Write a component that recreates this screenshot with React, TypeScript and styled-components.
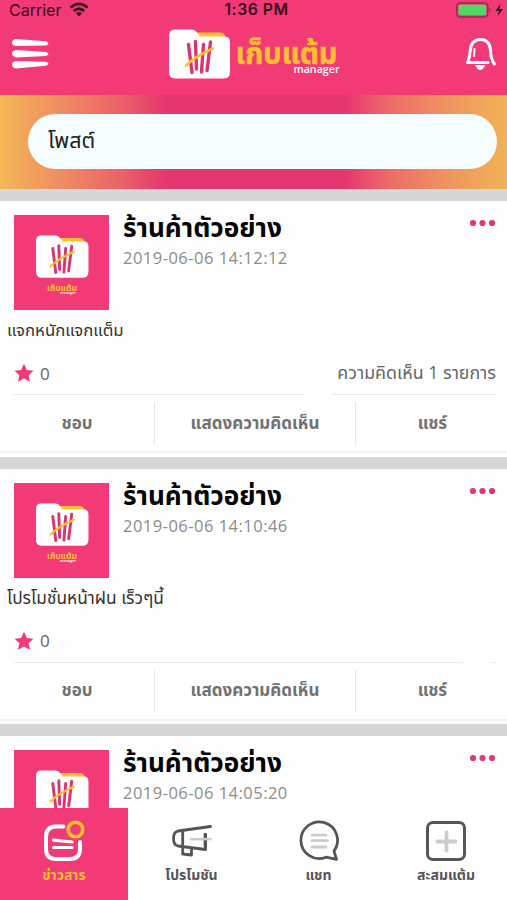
import React from "react";
import styled, { createGlobalStyle } from "styled-components";

const PINK = "#f23a76";
const YELLOW = "#fdc02f";
const THAI = `"Open Sans", "Noto Sans Thai", "Noto Sans", sans-serif`;

const GlobalStyle = createGlobalStyle`
  * { box-sizing: border-box; }
  body { margin: 0; background: #fff; font-family: ${THAI}; }
`;

const Screen = styled.div`
  display: flex;
  flex-direction: column;
  width: 507px;
  height: 900px;
  overflow: hidden;
  background: #fefefe;
`;

const Header = styled.header`
  flex: none;
  height: 95px;
  background: ${PINK};
`;

const StatusBar = styled.div`
  display: grid;
  grid-template-columns: 1fr auto 1fr;
  align-items: center;
  height: 20px;
  padding: 0 3px 0 9px;
  font-family: Inter, sans-serif;
  font-size: 16px;
  line-height: 20px;
  color: #3b0a1d;
`;

const Carrier = styled.div`
  display: flex;
  align-items: center;
  gap: 8px;
  margin-top: -1px;
`;

const Clock = styled.div`
  font-weight: 600;
  font-size: 15.8px;
  letter-spacing: 0.5px;
`;

const Battery = styled.div`
  display: flex;
  justify-content: flex-end;
  margin-top: -1px;
`;

const NavBar = styled.div`
  display: flex;
  justify-content: space-between;
  align-items: flex-start;
  height: 75px;
  padding: 0 10px 0 12px;
`;

const MenuIcon = styled.svg`
  margin-top: 18px;
`;

const BellIcon = styled.svg`
  margin-top: 17px;
`;

const Brand = styled.svg`
  margin: 6px 0 0 -2px;
`;

const Composer = styled.section`
  flex: none;
  height: 94px;
  padding: 19px 10px 0 28px;
  background: linear-gradient(90deg, #f4b858 0, #f1a65b 25px, #f09162 55px, #ea6368 120px, #e6366f 165px, #e6366f 345px, #ec6b68 388px, #f0955f 450px, #f0ae57 495px, #f0b158 507px);
`;

const PostField = styled.div`
  display: flex;
  align-items: center;
  height: 55px;
  padding: 0 20px;
  border-radius: 28px;
  background: #f5fdff;
  color: #222;
`;

const Feed = styled.main`
  flex: 1;
  min-height: 0;
  overflow: hidden;
`;

const Post = styled.article`
  height: 267.5px;
  border-top: 12.5px solid #d7d7d7;
  background: #fefefe;
`;

const PostHead = styled.div`
  display: flex;
  height: 109px;
  padding: 14px 11px 0 14px;
`;

const Avatar = styled.svg`
  flex: none;
  display: block;
  width: 95px;
  height: 95px;
  background: ${PINK};
`;

const PostMeta = styled.div`
  flex: 1;
  padding-left: 14px;
`;

const ShopName = styled.h2`
  margin: 0;
  height: 32px;
  color: #050505;
  line-height: 24px;
`;

const PostDate = styled.time`
  display: block;
  height: 22px;
  font-size: 16.5px;
  letter-spacing: 0.48px;
  line-height: 22px;
  color: #8c8c8c;
`;

const Dots = styled.svg`
  margin-top: 4px;
`;

const PostBody = styled.p`
  display: flex;
  align-items: center;
  height: 42px;
  margin: 0;
  padding-left: 7px;
  color: #333;
`;

const Stats = styled.div<{ $split: number }>`
  display: grid;
  grid-template-columns: ${(p) => p.$split}px 1fr;
  column-gap: 27px;
  height: 43px;
  padding: 0 11px 0 14px;
`;

const Stat = styled.div<{ $end?: boolean }>`
  display: flex;
  align-items: center;
  justify-content: ${(p) => (p.$end ? "flex-end" : "flex-start")};
  gap: 6px;
  border-bottom: 1.5px solid #ebebeb;
  font-size: 17px;
  color: #666;
`;

const Actions = styled.div`
  display: grid;
  grid-template-columns: 155px 201px 1fr;
  height: 58px;
  padding-top: 7px;
  border-bottom: 2px solid #f3f3f3;
`;

const Action = styled.div`
  display: flex;
  align-items: center;
  justify-content: center;
  height: 43px;
  border-right: 1px solid #e5e5e5;
  color: #727272;
  &:last-child { border-right: 0; padding-left: 2px; }
`;

const Tabs = styled.nav`
  flex: none;
  display: grid;
  grid-template-columns: 128px 127px 127px 125px;
  height: 92px;
  background: #fefefe;
`;

const Tab = styled.div<{ $active?: boolean }>`
  display: flex;
  flex-direction: column;
  align-items: center;
  padding-top: 10px;
  background: ${(p) => (p.$active ? PINK : "transparent")};
  color: ${(p) => (p.$active ? YELLOW : "#555")};
  &:last-child { padding-left: 3px; }
`;

const TabLabel = styled.div`
  display: flex;
  align-items: center;
  height: 20px;
  margin-top: 1px;
`;

const Label = styled.span<{ $size: number; $bold?: boolean }>`
  font-size: ${(p) => p.$size}px;
  font-weight: ${(p) => (p.$bold ? 700 : 400)};
  white-space: nowrap;
`;

function Folder() {
  return (
    <g>
      <path d="M25 3H51Q56 3 57 9H31Z" fill={YELLOW} />
      <path d="M6 0H23Q26 0 28 3L31 7H56Q61 7 61 13V42Q61 49 55 49H6Q0 49 0 42V6Q0 0 6 0Z" fill="#fff" />
      <path d="M19.5 15 23 43M26.5 12 27.5 39.5M34.5 15 32.5 42.5M41.5 12.5 38 41" fill="none" stroke="#d93670" strokeWidth="3.4" strokeLinecap="round" />
      <path d="M17 36Q26 27 44 19" fill="none" stroke={YELLOW} strokeWidth="2.6" strokeLinecap="round" />
    </g>
  );
}

function ShopAvatar() {
  return (
    <Avatar viewBox="0 0 95 95">
      <g transform="translate(22 20.5) scale(.86)">
        <Folder />
      </g>
      <text x="33" y="76" fill={YELLOW} fontSize="9" fontWeight="700" textLength="30" lengthAdjust="spacingAndGlyphs">เก็บแต้ม</text>
      <text x="46" y="79" fill="#fff" fontSize="3.8" fontWeight="600" textLength="16" lengthAdjust="spacingAndGlyphs">manager</text>
    </Avatar>
  );
}

type PostData = { date: string; text: string; size: number; comments?: string };

const posts: PostData[] = [
  { date: "2019-06-06 14:12:12", text: "แจกหนักแจกแต็ม", size: 16.8, comments: "ความคิดเห็น 1 รายการ" },
  { date: "2019-06-06 14:10:46", text: "โปรโมชั่นหน้าฝน เร็วๆนี้", size: 17.3 },
  { date: "2019-06-06 14:05:20", text: "", size: 17 },
];

function PostCard({ post }: { post: PostData }) {
  return (
    <Post>
      <PostHead>
        <ShopAvatar />
        <PostMeta>
          <ShopName><Label $size={26.2} $bold>ร้านค้าตัวอย่าง</Label></ShopName>
          <PostDate>{post.date}</PostDate>
        </PostMeta>
        <Dots width="27" height="8" viewBox="0 0 27 8" fill="#df3a70">
          <circle cx="4" cy="4" r="3.1" /><circle cx="13.5" cy="4" r="3.1" /><circle cx="23" cy="4" r="3.1" />
        </Dots>
      </PostHead>
      <PostBody><Label $size={post.size}>{post.text}</Label></PostBody>
      <Stats $split={post.comments ? 290 : 449}>
        <Stat>
          <svg width="20" height="20" viewBox="0 0 20 20">
            <path d="M10 .8 12.9 7 19.5 7.7 14.6 12.2 16 18.8 10 15.5 4 18.8 5.4 12.2 .5 7.7 7.1 7Z" fill={PINK} />
          </svg>
          0
        </Stat>
        <Stat $end>{post.comments && <Label $size={17.8}>{post.comments}</Label>}</Stat>
      </Stats>
      <Actions>
        <Action><Label $size={17} $bold>ชอบ</Label></Action>
        <Action><Label $size={17} $bold>แสดงความคิดเห็น</Label></Action>
        <Action><Label $size={17} $bold>แชร์</Label></Action>
      </Actions>
    </Post>
  );
}

export default function App() {
  return (
    <Screen>
      <GlobalStyle />
      <Header>
        <StatusBar>
          <Carrier>
            Carrier
            <svg width="20" height="15" viewBox="0 0 20 15" fill="none" stroke="#3b0a1d" strokeWidth="2.8">
              <path d="M1.5 5.5Q10-1.8 18.5 5.5M4.8 9Q10 4.6 15.2 9" />
              <path d="M10 14.5 7 11.3Q10 8.8 13 11.3Z" fill="#3b0a1d" stroke="none" />
            </svg>
          </Carrier>
          <Clock>1:36 PM</Clock>
          <Battery>
            <svg width="48" height="16" viewBox="0 0 48 16">
              <rect x=".8" y="1" width="31" height="14" rx="3.5" fill="none" stroke="#8c2850" strokeWidth="1.3" />
              <rect x="2.5" y="2.8" width="27.6" height="10.4" rx="1.8" fill="#4cd964" />
              <path d="M33.5 5.5Q35.5 8 33.5 10.5Z" fill="#8c2850" />
              <path d="M44.5 2 39.5 9H43L41.5 14 47 7H43.5Z" fill="#3b0a1d" />
            </svg>
          </Battery>
        </StatusBar>
        <NavBar>
          <MenuIcon width="38" height="32" viewBox="0 0 38 32" fill="#fff">
            <path d="M4 1 34 3.2Q39 5.5 34 7.5L4 8Q0 7.5 0 4.5T4 1ZM4 12 34 14Q39 16 34 18L4 19.5Q0 18 0 15.5T4 12ZM4 23 34 23.7Q39 25.5 34 27.7L4 30.5Q0 29.5 0 26.5T4 23Z" />
          </MenuIcon>
          <Brand width="176" height="56" viewBox="0 0 176 56">
            <g transform="translate(1 3.5)"><Folder /></g>
            <text x="67.5" y="38" fill={YELLOW} stroke={YELLOW} strokeWidth=".5" fontSize="29.5" fontWeight="700" textLength="102" lengthAdjust="spacingAndGlyphs">เก็บแต้ม</text>
            <text x="125.5" y="47" fill="#fff" fontSize="11" fontWeight="600" textLength="46" lengthAdjust="spacingAndGlyphs">manager</text>
          </Brand>
          <BellIcon width="33" height="34" viewBox="0 0 33 34" fill="none" stroke="#fff" strokeWidth="3" strokeLinecap="round" strokeLinejoin="round">
            <path d="M24 25.5H3.5Q6 20 6.3 13Q7.5 2.5 16.5 2.5T26.5 13Q26.5 22 30.5 27" />
            <path d="M10.5 12 10 19" strokeWidth="2" />
            <path d="M11 28H21.5Q19 33 16.2 33T11 28Z" fill="#fff" stroke="none" />
          </BellIcon>
        </NavBar>
      </Header>
      <Composer>
        <PostField><Label $size={21.5}>โพสต์</Label></PostField>
      </Composer>
      <Feed>
        {posts.map((p) => <PostCard key={p.date} post={p} />)}
      </Feed>
      <Tabs>
        <Tab $active>
          <svg width="46" height="46" viewBox="0 0 46 46" fill="none" strokeLinecap="round">
            <path d="M22.5 8.5H15Q5 8.5 5 19V31Q5 41 15 41H29Q39 41 39 31V24" stroke="#fff" strokeWidth="4" />
            <path d="M12.5 22.2 31 24M12.5 29.5H31" stroke="#fff" strokeWidth="3.2" />
            <circle cx="34.5" cy="11.5" r="7.3" stroke={YELLOW} strokeWidth="3.6" />
          </svg>
          <TabLabel><Label $size={14} $bold>ข่าวสาร</Label></TabLabel>
        </Tab>
        <Tab>
          <svg width="46" height="46" viewBox="0 0 46 46" fill="none" stroke="#555" strokeWidth="2.8" strokeLinejoin="round" strokeLinecap="round">
            <path d="M41.5 8.5 9 13Q4.5 14 4.5 20.5T9 28L36.5 31.5V24M13.7 13V28.5" />
            <path d="M13.7 28.5V36L22.5 37V30.5" />
            <path d="M36.3 16.5V28" strokeWidth="3.4" />
            <path d="M22 21.3 41.5 21" stroke="#ccc" strokeWidth="2.5" />
          </svg>
          <TabLabel><Label $size={14} $bold>โปรโมชัน</Label></TabLabel>
        </Tab>
        <Tab>
          <svg width="46" height="46" viewBox="0 0 46 46" fill="none" stroke="#555" strokeWidth="2.8" strokeLinejoin="round" strokeLinecap="round">
            <path d="M38 33A18.3 18.3 0 1 0 30 39.2L40.5 41.3Z" />
            <path d="M16 17.2H30M16 22.7H31.5M16 29H30" stroke="#ccc" />
          </svg>
          <TabLabel><Label $size={14} $bold>แชท</Label></TabLabel>
        </Tab>
        <Tab>
          <svg width="46" height="46" viewBox="0 0 46 46" fill="none" stroke="#555" strokeWidth="3">
            <rect x="4.5" y="4.5" width="37" height="37" rx="5.5" />
            <path d="M14.5 23.5H32.5M23.5 14.5V32.5" stroke="#ccc" strokeWidth="3.8" strokeLinecap="round" />
          </svg>
          <TabLabel><Label $size={14} $bold>สะสมแต้ม</Label></TabLabel>
        </Tab>
      </Tabs>
    </Screen>
  );
}
